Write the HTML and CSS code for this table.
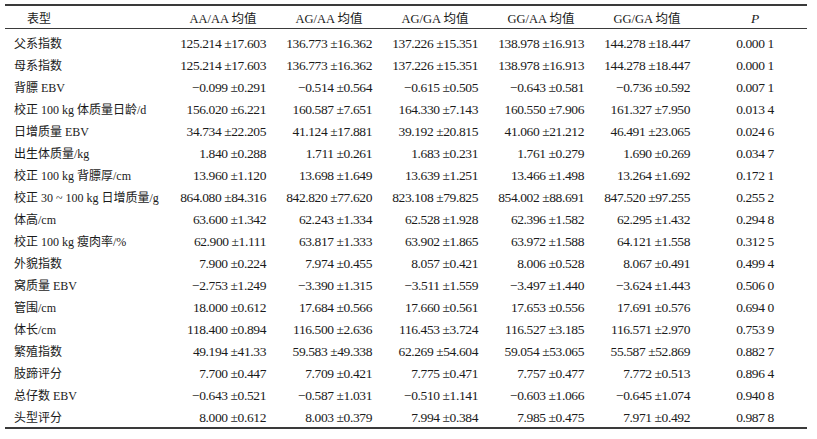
FILE: index.html
```html
<!DOCTYPE html>
<html lang="zh">
<head>
<meta charset="utf-8">
<link rel="stylesheet" href="styles.css">
</head>
<body>
<div class="table">
  <div class="row head">
    <div class="name">表型</div>
    <div class="h">AA/AA 均值</div>
    <div class="h">AG/AA 均值</div>
    <div class="h">AG/GA 均值</div>
    <div class="h">GG/AA 均值</div>
    <div class="h">GG/GA 均值</div>
    <div class="h p"><i>P</i></div>
  </div>
  <div class="body">
    <div class="row"><div class="name">父系指数</div><div class="v">125.214 ±17.603</div><div class="v">136.773 ±16.362</div><div class="v">137.226 ±15.351</div><div class="v">138.978 ±16.913</div><div class="v">144.278 ±18.447</div><div class="p">0.000 1</div></div>
    <div class="row"><div class="name">母系指数</div><div class="v">125.214 ±17.603</div><div class="v">136.773 ±16.362</div><div class="v">137.226 ±15.351</div><div class="v">138.978 ±16.913</div><div class="v">144.278 ±18.447</div><div class="p">0.000 1</div></div>
    <div class="row"><div class="name">背膘 EBV</div><div class="v">−0.099 ±0.291</div><div class="v">−0.514 ±0.564</div><div class="v">−0.615 ±0.505</div><div class="v">−0.643 ±0.581</div><div class="v">−0.736 ±0.592</div><div class="p">0.007 1</div></div>
    <div class="row"><div class="name">校正 100 kg 体质量日龄/d</div><div class="v">156.020 ±6.221</div><div class="v">160.587 ±7.651</div><div class="v">164.330 ±7.143</div><div class="v">160.550 ±7.906</div><div class="v">161.327 ±7.950</div><div class="p">0.013 4</div></div>
    <div class="row"><div class="name">日增质量 EBV</div><div class="v">34.734 ±22.205</div><div class="v">41.124 ±17.881</div><div class="v">39.192 ±20.815</div><div class="v">41.060 ±21.212</div><div class="v">46.491 ±23.065</div><div class="p">0.024 6</div></div>
    <div class="row"><div class="name">出生体质量/kg</div><div class="v">1.840 ±0.288</div><div class="v">1.711 ±0.261</div><div class="v">1.683 ±0.231</div><div class="v">1.761 ±0.279</div><div class="v">1.690 ±0.269</div><div class="p">0.034 7</div></div>
    <div class="row"><div class="name">校正 100 kg 背膘厚/cm</div><div class="v">13.960 ±1.120</div><div class="v">13.698 ±1.649</div><div class="v">13.639 ±1.251</div><div class="v">13.466 ±1.498</div><div class="v">13.264 ±1.692</div><div class="p">0.172 1</div></div>
    <div class="row"><div class="name">校正 30 ~ 100 kg 日增质量/g</div><div class="v">864.080 ±84.316</div><div class="v">842.820 ±77.620</div><div class="v">823.108 ±79.825</div><div class="v">854.002 ±88.691</div><div class="v">847.520 ±97.255</div><div class="p">0.255 2</div></div>
    <div class="row"><div class="name">体高/cm</div><div class="v">63.600 ±1.342</div><div class="v">62.243 ±1.334</div><div class="v">62.528 ±1.928</div><div class="v">62.396 ±1.582</div><div class="v">62.295 ±1.432</div><div class="p">0.294 8</div></div>
    <div class="row"><div class="name">校正 100 kg 瘦肉率/%</div><div class="v">62.900 ±1.111</div><div class="v">63.817 ±1.333</div><div class="v">63.902 ±1.865</div><div class="v">63.972 ±1.588</div><div class="v">64.121 ±1.558</div><div class="p">0.312 5</div></div>
    <div class="row"><div class="name">外貌指数</div><div class="v">7.900 ±0.224</div><div class="v">7.974 ±0.455</div><div class="v">8.057 ±0.421</div><div class="v">8.006 ±0.528</div><div class="v">8.067 ±0.491</div><div class="p">0.499 4</div></div>
    <div class="row"><div class="name">窝质量 EBV</div><div class="v">−2.753 ±1.249</div><div class="v">−3.390 ±1.315</div><div class="v">−3.511 ±1.559</div><div class="v">−3.497 ±1.440</div><div class="v">−3.624 ±1.443</div><div class="p">0.506 0</div></div>
    <div class="row"><div class="name">管围/cm</div><div class="v">18.000 ±0.612</div><div class="v">17.684 ±0.566</div><div class="v">17.660 ±0.561</div><div class="v">17.653 ±0.556</div><div class="v">17.691 ±0.576</div><div class="p">0.694 0</div></div>
    <div class="row"><div class="name">体长/cm</div><div class="v">118.400 ±0.894</div><div class="v">116.500 ±2.636</div><div class="v">116.453 ±3.724</div><div class="v">116.527 ±3.185</div><div class="v">116.571 ±2.970</div><div class="p">0.753 9</div></div>
    <div class="row"><div class="name">繁殖指数</div><div class="v">49.194 ±41.33</div><div class="v">59.583 ±49.338</div><div class="v">62.269 ±54.604</div><div class="v">59.054 ±53.065</div><div class="v">55.587 ±52.869</div><div class="p">0.882 7</div></div>
    <div class="row"><div class="name">肢蹄评分</div><div class="v">7.700 ±0.447</div><div class="v">7.709 ±0.421</div><div class="v">7.775 ±0.471</div><div class="v">7.757 ±0.477</div><div class="v">7.772 ±0.513</div><div class="p">0.896 4</div></div>
    <div class="row"><div class="name">总仔数 EBV</div><div class="v">−0.643 ±0.521</div><div class="v">−0.587 ±1.031</div><div class="v">−0.510 ±1.141</div><div class="v">−0.603 ±1.066</div><div class="v">−0.645 ±1.074</div><div class="p">0.940 8</div></div>
    <div class="row"><div class="name">头型评分</div><div class="v">8.000 ±0.612</div><div class="v">8.003 ±0.379</div><div class="v">7.994 ±0.384</div><div class="v">7.985 ±0.475</div><div class="v">7.971 ±0.492</div><div class="p">0.987 8</div></div>
  </div>
</div>
</body>
</html>
```

FILE: styles.css
```css
html, body {
  margin: 0;
  padding: 0;
  background: #ffffff;
}

body {
  font-family: "Liberation Serif", "Noto Sans CJK SC", serif;
  color: #1a1a1a;
}

.table {
  width: 802px;
  margin: 4px 0 0 5px;
  border-top: 2px solid #3a3a3a;
  border-bottom: 2px solid #3a3a3a;
}

.row {
  display: grid;
  grid-template-columns: 155px repeat(5, 86px) 1fr;
  column-gap: 20px;
  align-items: center;
  height: 22px;
}

.row.head {
  border-bottom: 1px solid #3a3a3a;
  font-size: 12px;
}

.body {
  padding: 2px 0 0;
}

.name {
  font-size: 12px;
  padding-left: 9px;
  white-space: nowrap;
  line-height: 22px;
  padding-top: 2px;
}

.head .name {
  padding-left: 22px;
}

.h {
  font-size: 12.5px;
  text-align: center;
  white-space: nowrap;
  line-height: 22px;
  padding-top: 2px;
}

.v {
  font-size: 13.5px;
  letter-spacing: -0.4px;
  text-align: right;
  white-space: nowrap;
  line-height: 22px;
  padding-top: 2px;
}

.p {
  font-size: 13.5px;
  letter-spacing: -0.4px;
  text-align: center;
  padding-right: 7px;
  white-space: nowrap;
  line-height: 22px;
  padding-top: 2px;
}

.h.p {
  font-size: 13.5px;
}
```
